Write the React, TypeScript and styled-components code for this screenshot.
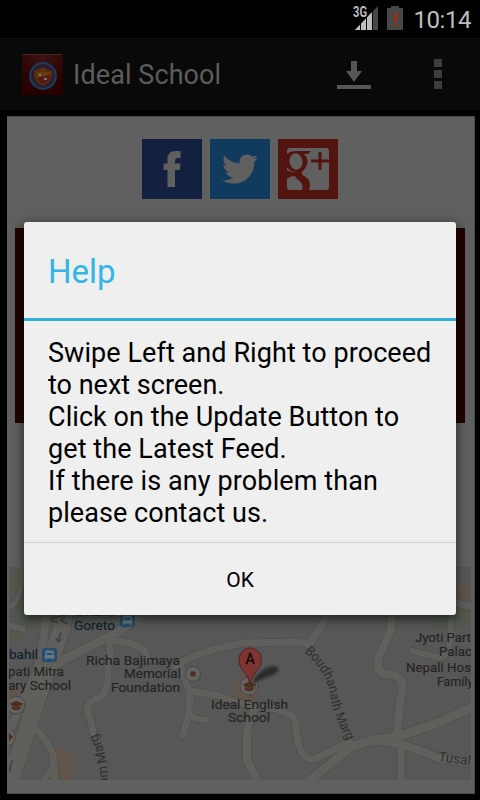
import React from 'react';
import styled, { createGlobalStyle } from 'styled-components';
import { FaTwitter } from 'react-icons/fa';

const GlobalStyle = createGlobalStyle`
  * { box-sizing: border-box; }
  body { margin: 0; background: #000; font-family: Roboto, sans-serif; overflow: hidden; }
`;

const Screen = styled.div`
  position: relative;
  display: flex;
  flex-direction: column;
  width: 480px;
  height: 800px;
  background: #000;
`;

const StatusBar = styled.header`
  display: flex;
  flex: none;
  justify-content: flex-end;
  height: 38px;
  padding-right: 9px;
  color: #bebebe;
`;

const Clock = styled.span`
  margin-left: 8px;
  font-size: 24px;
  line-height: 40px;
  letter-spacing: -0.45px;
`;

const ActionBar = styled.nav`
  display: flex;
  flex: none;
  align-items: center;
  height: 72px;
  padding-left: 22px;
  background: #090909;
  border-top: 1px solid #0d100b;
`;

const AppTitle = styled.h1`
  flex: 1;
  margin: 0 0 0 10px;
  color: #5c5c5c;
  font-size: 27px;
  font-weight: 400;
  line-height: 72px;
  letter-spacing: 0.08px;
`;

const Download = styled.svg`
  margin-right: 63px;
`;

const Overflow = styled.div`
  display: grid;
  gap: 3px;
  margin: 0 38px 2px 0;
`;

const Dot = styled.i`
  width: 8px;
  height: 8px;
  background: #3d3d3d;
`;

const Page = styled.main`
  display: flex;
  flex: none;
  flex-direction: column;
  width: 468px;
  height: 678px;
  margin: 6px 0 0 7px;
  background: #606060;
  border: 1px solid #484848;
  border-left: 0;
`;

const SocialRow = styled.div`
  display: flex;
  justify-content: center;
  gap: 8px;
  margin: 22px 1px 29px 0;
`;

const SocialTile = styled.a<{ $color: string }>`
  display: grid;
  place-items: center;
  width: 60px;
  height: 60px;
  background: ${(p) => p.$color};
  color: #606060;
`;

const Banner = styled.div`
  height: 195px;
  margin: 0 9px 144px 8px;
  background: #210002;
`;

const MapImage = styled.svg`
  display: block;
  flex: none;
  width: 462px;
  height: 213px;
  margin-left: 2px;
  background: #575757;
`;

const Dialog = styled.section`
  position: absolute;
  top: 222px;
  left: 24px;
  display: flex;
  flex-direction: column;
  width: 432px;
  height: 393px;
  border-radius: 3px;
  background: #efefef;
  box-shadow: 0 4px 9px rgba(0, 0, 0, 0.5), 0 2px 13px 2px rgba(24, 48, 20, 0.3);
`;

const DialogTitle = styled.h2`
  height: 99px;
  margin: 0;
  padding-left: 24px;
  border-bottom: 3px solid #2fb1df;
  color: #33b5e5;
  font-size: 33px;
  font-weight: 400;
  line-height: 99px;
`;

const Message = styled.div`
  flex: 1;
  padding: 16px 0 0 24px;
  color: #000;
`;

const Line = styled.p<{ $spacing: number }>`
  margin: 0;
  font-size: 27px;
  line-height: 32px;
  letter-spacing: ${(p) => p.$spacing}px;
  white-space: nowrap;
`;

const OkButton = styled.button`
  height: 73px;
  padding: 1px 0 0;
  border: 0;
  border-top: 1px solid #d2d2d2;
  background: transparent;
  color: #000;
  font: 400 21px Roboto, sans-serif;
`;

const roads: [string, number][] = [
  ['M66 600 L62 628 L46 672 L30 720 L8 790', 17],
  ['M46 614 Q44 648 36 673 L5 740', 8],
  ['M150 609 L116 633 L65 659 L42 672', 9],
  ['M108 638 Q112 650 108 668 Q109 691 101 697 C83 703 86 709 91 721 L93 733', 7],
  ['M107 640 Q132 641 145 651 L148 660', 7],
  ['M28 720 Q49 742 53 755 L55 782', 7],
  ['M52 770 L40 784', 6],
  ['M5 624 L23 629', 6],
  ['M9 608 Q25 598 21 565', 5],
  ['M175 666 Q200 650 245 643 L300 642 L309 645 L334 606', 7],
  ['M180 665 Q188 688 190 694 L189 715 L183 735', 7],
  ['M188 715 Q196 719 206 720', 6],
  ['M190 691 L215 695 L254 707 Q298 708 296 728 C298 750 304 761 315 759 L349 742', 7],
  ['M254 710 Q248 723 247 733 L247 760 L259 784', 8],
  ['M304 785 L345 752 Q353 742 396 737 L440 722 L474 706', 9],
  ['M392 606 L391 630 L379 657 C376 670 380 674 390 675 C405 676 404 688 400 701 L397 735', 8],
  ['M373 740 Q407 743 438 758 L474 764', 8],
  ['M401 744 L401 785', 7],
  ['M412 651 L441 658 Q449 655 450 640 L451 604', 6],
  ['M451 602 L474 607', 7],
];

type Label = { x: number; y: number; w: number; text: string; blue?: boolean };
const labels: Label[] = [
  { x: 76, y: 616, w: 39, text: 'Chahil', blue: true },
  { x: 74, y: 630, w: 41, text: 'Goreto', blue: true },
  { x: 9, y: 659, w: 29, text: 'bahil', blue: true },
  { x: 8, y: 676, w: 56, text: 'pati Mitra' },
  { x: 8, y: 690, w: 63, text: 'ary School' },
  { x: 86, y: 665, w: 94, text: 'Richa Bajimaya' },
  { x: 124, y: 678, w: 57, text: 'Memorial' },
  { x: 111, y: 692, w: 69, text: 'Foundation' },
  { x: 211, y: 709, w: 77, text: 'Ideal English' },
  { x: 228, y: 722, w: 42, text: 'School' },
  { x: 415, y: 642, w: 56, text: 'Jyoti Part' },
  { x: 439, y: 656, w: 33, text: 'Palac' },
  { x: 406, y: 672, w: 65, text: 'Nepali Hos' },
  { x: 437, y: 686, w: 36, text: 'Family' },
];

function BusStop({ x, y }: { x: number; y: number }) {
  return (
    <g transform={`translate(${x} ${y})`}>
      <rect width="15" height="14" rx="3" fill="#244d72" />
      <path d="M4 3h7l1 7H3zM4 10v2M11 10v2" fill="#6b7884" stroke="#6b7884" />
      <path d="M4.5 5h6v2h-6z" fill="#244d72" />
    </g>
  );
}

function SchoolMark({ x, y }: { x: number; y: number }) {
  return (
    <g transform={`translate(${x} ${y})`}>
      <circle r="9" fill="#666462" stroke="#494746" />
      <path d="M-6-1 0-4 7-1 0 2zM-4 1v3q4 2 8 0V1L0 3zM6-1v5" fill="#4d2e20" stroke="#4d2e20" strokeWidth=".6" />
    </g>
  );
}

function AreaMap() {
  return (
    <MapImage viewBox="9 567 462 213" fontFamily="Roboto, sans-serif">
      <path d="M5 560h48v38L43 618 5 650zM433 595h40v35h-40z" fill="#535850" />
      <path d="M455 581l16 5v15l-16-4zM56 748l12 3 8 11-8 20H57zM239 672l21 1-3 28-24-3zM9 690h15l-4 11H9z" fill="#61544b" />
      {roads.map(([d, w]) => (
        <path key={d} d={d} fill="none" stroke="#534f4b" strokeWidth={w + 1.6} strokeLinecap="round" strokeLinejoin="round" />
      ))}
      {roads.map(([d, w]) => (
        <path key={d} d={d} fill="none" stroke="#5f5f5c" strokeWidth={w} strokeLinecap="round" strokeLinejoin="round" />
      ))}
      <path d="M52 618l14-3-5 6 7 3M51 620l7 3M61 632l-3 10m0 0-2-4m2 4 4-3M12 760l-3 12m2-8-2 6" fill="none" stroke="#40403e" strokeWidth="1.5" />
      <BusStop x={120} y={613} />
      <BusStop x={42} y={648} />
      <SchoolMark x={16} y={705} />
      <circle cx="7" cy="737" r="8.5" fill="#666462" stroke="#494746" />
      <path d="M6 737h7m-4-4v8" stroke="#4d2e25" strokeWidth="3" />
      <circle cx="193" cy="674" r="7.5" fill="#666462" stroke="#494746" />
      <rect x="190.5" y="671.5" width="5" height="5" fill="#4d2e20" />
      <SchoolMark x={249} y={686} />
      <g filter="url(#soft)">
        <path d="M250 686 Q260 666 276 666 Q285 672 260 680z" fill="#292b29" />
      </g>
      <defs>
        <filter id="soft"><feGaussianBlur stdDeviation="1.4" /></filter>
        <path id="boudhanath" d="M304 652 C319 664 328 679 331 699 C333 712 338 724 348 742" />
        <path id="marg" d="M107 793 C109 771 107 752 96 733" />
      </defs>
      <path d="M250 684 Q249 676 242 669 C235 659 241 648 250 648 S266 659 258 669 Q251 676 250 684z" fill="#7e3531" stroke="#4c211f" />
      <text x="250" y="664" fontSize="14" textAnchor="middle" fill="#0b0505" stroke="#0b0505" strokeWidth=".3">A</text>
      {labels.map((l) => (
        <text key={l.text + l.y} x={l.x} y={l.y} textLength={l.w} lengthAdjust="spacingAndGlyphs" fontSize="13" fill={l.blue ? '#0e202f' : '#242322'} stroke={l.blue ? '#0e202f' : '#242322'} strokeWidth=".15">
          {l.text}
        </text>
      ))}
      <g fontSize="13.5" fill="#30302e">
        <text><textPath href="#boudhanath" textLength="101" lengthAdjust="spacingAndGlyphs">Boudhanath Marg</textPath></text>
        <text><textPath href="#marg" startOffset="8">am Marg</textPath></text>
        <text transform="translate(438 761) rotate(8)">Tusal</text>
      </g>
    </MapImage>
  );
}

function AppIcon() {
  return (
    <svg width="41" height="41" viewBox="0 0 41 41">
      <defs>
        <radialGradient id="gloss" cx="50%" cy="0%" r="80%">
          <stop offset="0" stopColor="#3b1413" />
          <stop offset="1" stopColor="#290000" />
        </radialGradient>
      </defs>
      <rect width="41" height="41" rx="1" fill="url(#gloss)" />
      <path d="M1 .5h39" stroke="#4a2523" />
      <circle cx="21" cy="22" r="12.8" fill="#2c1d28" stroke="#173c60" strokeWidth="2.2" />
      <path d="M13 17q5 0 8-3 3 3 8 3 2 9-8 14-10-5-8-14z" fill="#591710" stroke="#5e3b12" strokeWidth="1.2" />
      <path d="M14 18q5 0 7-2 4 3 7 2v3l-13 3z" fill="#643b15" />
      <path d="M17 20h2v2h-2zM22 24h3v2h-3z" fill="#777" />
    </svg>
  );
}

function FacebookLetter() {
  return (
    <svg width="60" height="60" viewBox="0 0 60 60">
      <path d="M25.5 48V31H21.5V24.5H25.5V20Q25.5 12 34 12H38.5V19H35.5Q33 19 33 22V24.5H38.5L37.8 31H33V48z" fill="#606060" />
    </svg>
  );
}

function GooglePlus() {
  return (
    <svg width="60" height="60" viewBox="0 0 60 60">
      <rect x="9" y="9" width="42" height="42" rx="3" fill="#606060" />
      <g fill="#53130e">
        <path d="M9 15Q12 12 19 12H33L30 15H26Q31 20 29 26 27 30 24 33 23 36 28 38 34 42 31 51H24Q26 44 19 40 15 36 18 33 12 33 9 28z" />
        <path d="M9 31Q14 34 19 33L17 37Q12 37 9 40z" />
        <path d="M33 20.5H51V23.5H33zM40.5 13H43.5V31H40.5z" />
      </g>
      <ellipse cx="18" cy="22.5" rx="6.4" ry="8.3" transform="rotate(-12 18 22.5)" fill="#606060" />
      <path d="M9.5 47Q9.5 40 17 40 24 42 24 48L18 50Q12 50 9.5 47z" fill="#606060" />
    </svg>
  );
}

const message: [string, number][] = [
  ['Swipe Left and Right to proceed', 0.07],
  ['to next screen.', 0],
  ['Click on the Update Button to', 0.06],
  ['get the Latest Feed.', 0.08],
  ['If there is any problem than', 0.12],
  ['please contact us.', 0.05],
];

export default function App() {
  return (
    <Screen>
      <GlobalStyle />
      <StatusBar>
        <svg width="53" height="32" viewBox="0 0 53 32">
          <path d="M3 30 26 6v24z" fill="#474747" />
          <path d="M3 30 20 12v18z" fill="#bebebe" />
          <path d="M8.5 20v10M14.5 16v14M20.5 10v20" stroke="#000" />
          <text x="1" y="17" fontFamily="Roboto, sans-serif" fontSize="14" fontWeight="700" textLength="14" lengthAdjust="spacingAndGlyphs" fill="#bebebe" stroke="#000" strokeWidth="2" paintOrder="stroke">3G</text>
          <path d="M35 8h4V6h8v2h4v22H35z" fill="#474747" />
          <path d="M43.5 13v9M43.5 24v2" stroke="#bd2500" strokeWidth="2.4" />
        </svg>
        <Clock>10:14</Clock>
      </StatusBar>
      <ActionBar>
        <AppIcon />
        <AppTitle>Ideal School</AppTitle>
        <Download width="34" height="28" viewBox="0 0 34 28">
          <path d="M14 0h6v10h5L17 21 9 10h5zM0 24h34v4H0z" fill="#565656" />
        </Download>
        <Overflow><Dot /><Dot /><Dot /></Overflow>
      </ActionBar>
      <Page>
        <SocialRow>
          <SocialTile $color="#14203f"><FacebookLetter /></SocialTile>
          <SocialTile $color="#103b5e"><FaTwitter size={36} /></SocialTile>
          <SocialTile $color="#53130e"><GooglePlus /></SocialTile>
        </SocialRow>
        <Banner />
        <AreaMap />
      </Page>
      <Dialog role="dialog" aria-label="Help">
        <DialogTitle>Help</DialogTitle>
        <Message>
          {message.map(([text, spacing]) => <Line key={text} $spacing={spacing}>{text}</Line>)}
        </Message>
        <OkButton>OK</OkButton>
      </Dialog>
    </Screen>
  );
}
